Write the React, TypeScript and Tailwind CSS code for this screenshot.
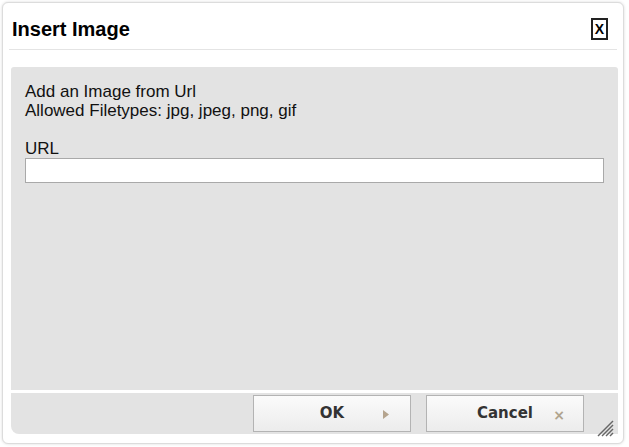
import React from 'react';

const sans = { fontFamily: '"Liberation Sans", Arial, sans-serif' };

const ResizeGrip = () => (
  <svg className="absolute right-[4px] bottom-[-3px] h-[18px] w-[18px]" viewBox="0 0 18 18">
    <g stroke="#666" strokeWidth="1.4">
      <line x1="2" y1="17" x2="17" y2="2" />
      <line x1="6" y1="17" x2="17" y2="6" />
      <line x1="10" y1="17" x2="17" y2="10" />
      <line x1="14" y1="17" x2="17" y2="14" />
    </g>
  </svg>
);

const DialogButton = ({ label, icon }: { label: string; icon: React.ReactNode }) => (
  <button
    type="button"
    className="relative flex h-[37px] w-[158px] items-center justify-center border border-[#b3b3b3] bg-gradient-to-b from-[#fbfbfb] to-[#ececec] text-[15px] font-bold text-[#333]"
    style={{ fontFamily: '"DejaVu Sans", Verdana, sans-serif' }}
  >
    {label}
    {icon}
  </button>
);

export default function App() {
  return (
    <div className="relative h-[447px] w-[629px] overflow-hidden bg-white" style={sans}>
      <div className="ml-[2px] mt-[2px] flex h-[442px] w-[622px] flex-col rounded-[6px] border border-[#dcdcdc] bg-white shadow-[0_0_3px_rgba(0,0,0,0.15)]">
        {/* Header */}
        <div className="flex h-[46px] items-center justify-between pl-[9px] pr-[15px]">
          <h1 className="pt-[6px] text-[20px] font-bold text-black">Insert Image</h1>
          <button
            type="button"
            className="mt-[6px] flex h-[22px] w-[17px] items-center justify-center border-2 border-[#222] text-[14px] font-bold leading-none text-black"
            style={sans}
          >
            X
          </button>
        </div>
        <div className="mx-[6px] border-t border-[#e4e4e4]" />

        {/* Body */}
        <div className="ml-[8px] mr-[5px] mt-[17px] flex h-[323px] flex-col rounded-t-[3px] bg-[#e3e3e3] px-[14px] pt-[15px] text-[17px] leading-[19px] text-[#111]">
          <p>Add an Image from Url</p>
          <p>Allowed Filetypes: jpg, jpeg, png, gif</p>
          <label className="mt-[19px] block">URL</label>
          <input
            type="text"
            className="h-[25px] w-full border border-[#a9a9a9] bg-white px-1 outline-none"
          />
        </div>

        {/* Footer */}
        <div className="relative ml-[8px] mr-[5px] mt-[3px] flex h-[41px] items-start justify-start gap-[15px] rounded-bl-[8px] bg-[#e3e3e3] pl-[242px] pt-[2px]">
          <DialogButton
            label="OK"
            icon={
              <svg className="absolute right-[21px] top-[14px] h-[9px] w-[6px]" viewBox="0 0 6 9">
                <polygon points="0,0 6,4.5 0,9" fill="#b5a48e" />
              </svg>
            }
          />
          <DialogButton
            label="Cancel"
            icon={
              <span className="absolute right-[18px] top-[9px] text-[14px] font-bold text-[#b0a48f]">×</span>
            }
          />
          <ResizeGrip />
        </div>
      </div>
    </div>
  );
}
